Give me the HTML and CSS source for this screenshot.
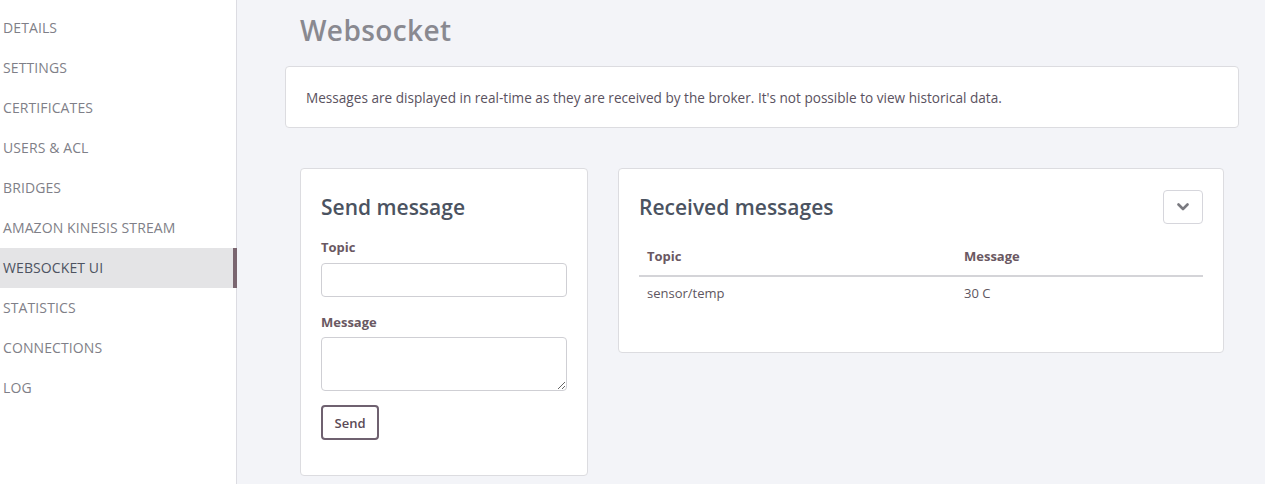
FILE: index.html
```html
<!DOCTYPE html>
<html>
<head>
<meta charset="utf-8">
<link rel="stylesheet" href="styles.css">
</head>
<body>
<div class="layout">
  <nav class="sidebar">
    <a class="nav-item">DETAILS</a>
    <a class="nav-item">SETTINGS</a>
    <a class="nav-item">CERTIFICATES</a>
    <a class="nav-item">USERS &amp; ACL</a>
    <a class="nav-item">BRIDGES</a>
    <a class="nav-item">AMAZON KINESIS STREAM</a>
    <a class="nav-item active">WEBSOCKET UI</a>
    <a class="nav-item">STATISTICS</a>
    <a class="nav-item">CONNECTIONS</a>
    <a class="nav-item">LOG</a>
  </nav>
  <main class="main">
    <h1 class="page-title">Websocket</h1>
    <div class="info-box">Messages are displayed in real-time as they are received by the broker. It's not possible to view historical data.</div>
    <div class="cards">
      <section class="card send-card">
        <h2 class="card-title">Send message</h2>
        <label class="field-label">Topic</label>
        <input class="text-input" type="text">
        <label class="field-label field-label-second">Message</label>
        <textarea class="text-area"></textarea>
        <button class="send-btn">Send</button>
      </section>
      <section class="card recv-card">
        <div class="recv-head">
          <h2 class="card-title">Received messages</h2>
          <button class="toggle-btn"><svg width="12" height="8" viewBox="0 0 12 8"><path d="M1.5 1.5 L6 6 L10.5 1.5" fill="none" stroke="#7a7a80" stroke-width="2.6" stroke-linecap="round" stroke-linejoin="round"/></svg></button>
        </div>
        <table class="msg-table">
          <thead><tr><th class="col-topic">Topic</th><th>Message</th></tr></thead>
          <tbody><tr><td>sensor/temp</td><td>30 C</td></tr></tbody>
        </table>
      </section>
    </div>
  </main>
</div>
</body>
</html>
```
FILE: styles.css
```css
* { box-sizing: border-box; }
html, body { margin: 0; padding: 0; height: 100%; }
body {
  font-family: "Open Sans", "Noto Sans", sans-serif;
  background: #f3f4f8;
  color: #5d5660;
}
.layout { display: flex; min-height: 484px; }
.sidebar {
  width: 237px;
  flex: none;
  background: #fff;
  border-right: 1px solid #dcdce2;
  padding-top: 8px;
  display: flex;
  flex-direction: column;
}
.nav-item {
  display: flex;
  align-items: center;
  height: 40px;
  padding-left: 3px;
  padding-bottom: 2px;
  font-size: 14px;
  font-weight: 500;
  color: #7f7f88;
  letter-spacing: 0.1px;
}
.nav-item.active {
  background: #e4e4e6;
  color: #4d5361;
  border-right: 4px solid #7a6670;
  margin-right: -1px;
}
.main {
  flex: 1;
  padding: 0 26px 0 48px;
}
.page-title {
  margin: 12px 0 0 15px;
  font-size: 28px;
  font-weight: 600;
  color: #898990;
  line-height: 36px;
  letter-spacing: 0.4px;
}
.info-box {
  margin-top: 18px;
  height: 62px;
  background: #fff;
  border: 1px solid #dcdce0;
  border-radius: 4px;
  display: flex;
  align-items: center;
  padding: 0 20px;
  font-size: 13.6px;
  color: #5a5260;
}
.cards {
  display: flex;
  align-items: flex-start;
  gap: 30px;
  margin: 40px 15px 0 15px;
}
.card {
  flex: none;
  background: #fff;
  border: 1px solid #dcdce0;
  border-radius: 4px;
  padding: 20px 20px;
}
.send-card {
  width: 288px;
  height: 308px;
  display: flex;
  flex-direction: column;
  align-items: flex-start;
}
.recv-card { width: 606px; height: 185px; }
.card-title {
  margin: 0;
  font-size: 21px;
  font-weight: 600;
  color: #4b5361;
  line-height: 36px;
}
.field-label {
  margin-top: 13px;
  font-size: 13px;
  font-weight: 700;
  color: #6a5862;
  line-height: 18px;
}
.field-label-second { margin-top: 16px; }
.text-input {
  margin-top: 7px;
  width: 246px;
  height: 34px;
  border: 1px solid #cfcfd4;
  border-radius: 4px;
  background: #fff;
}
.text-area {
  margin-top: 6px;
  width: 246px;
  height: 54px;
  border: 1px solid #cfcfd4;
  border-radius: 4px;
  background: #fff;
  resize: vertical;
  font-family: inherit;
}
.send-btn {
  margin-top: 14px;
  width: 58px;
  height: 35px;
  background: #fff;
  border: 2px solid #6f6170;
  border-radius: 4px;
  font-family: inherit;
  font-size: 13px;
  font-weight: 600;
  color: #5a4a56;
  padding: 0;
}
.recv-head {
  display: flex;
  justify-content: space-between;
  align-items: center;
}
.toggle-btn {
  width: 40px;
  height: 34px;
  margin-right: 0;
  background: #fff;
  border: 1px solid #d6d6dc;
  border-radius: 4px;
  display: flex;
  align-items: center;
  justify-content: center;
  padding: 0;
}
.msg-table {
  width: 564px;
  margin-top: 13px;
  border-collapse: collapse;
  font-size: 13px;
}
.msg-table th {
  text-align: left;
  font-weight: 700;
  color: #6a5862;
  padding: 9px 8px 10px;
  border-bottom: 2px solid #d4d4d8;
}
.msg-table .col-topic { width: 317px; }
.msg-table td {
  padding: 7px 8px;
  color: #5e5660;
}
```
